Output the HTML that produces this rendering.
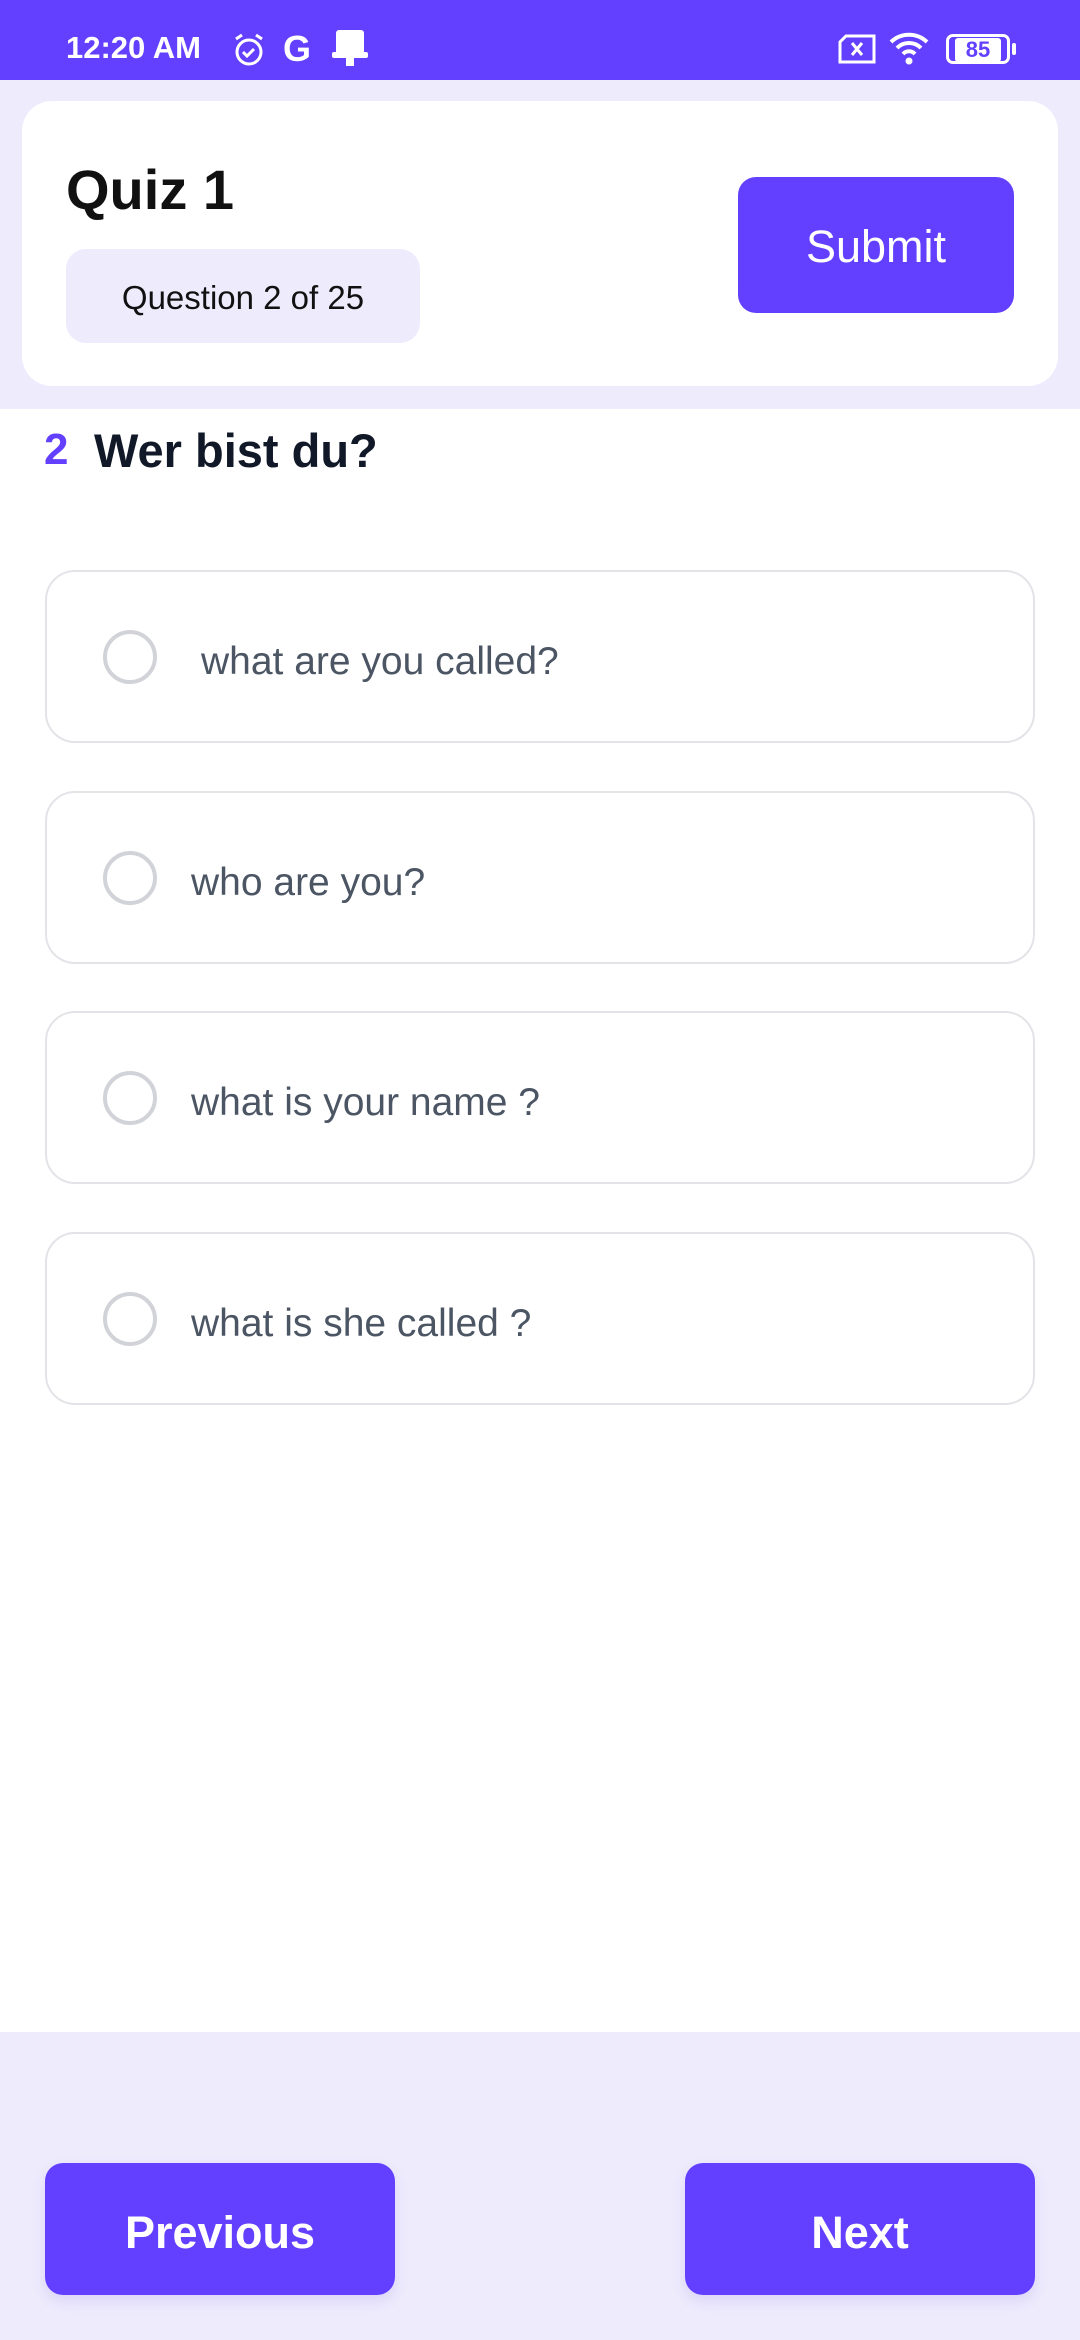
<!DOCTYPE html>
<html><head><meta charset="utf-8"><style>
*{margin:0;padding:0;box-sizing:border-box}
body{width:1080px;height:2340px;background:#fff;font-family:"Liberation Sans",sans-serif;position:relative;overflow:hidden}
.a{position:absolute}
.sb{left:0;top:0;width:1080px;height:80px;background:#6340FF;color:#fff}
.hdr{left:0;top:80px;width:1080px;height:329px;background:#EEEBFD}
.card{left:22px;top:101px;width:1036px;height:285px;background:#fff;border-radius:30px}
.btn{background:#6340FF;color:#fff;display:flex;align-items:center;justify-content:center}
.opt{left:45px;width:990px;height:173px;border:2px solid #e3e4e8;border-radius:30px;background:#fff}
.opt .c{position:absolute;left:56px;top:58px;width:54px;height:54px;border:4px solid #d1d3d8;border-radius:50%}
.opt .t{position:absolute;left:144px;top:5px;line-height:169px;font-size:39px;color:#4b5563}
.bot{left:0;top:2032px;width:1080px;height:308px;background:#EEEBFD}
</style></head><body>
<div class="a sb">
<div class="a" style="left:66px;top:30px;font-size:31px;font-weight:bold;">12:20 AM</div>
<svg class="a" style="left:232px;top:32px" width="34" height="36" viewBox="0 0 34 36"><circle cx="17" cy="20" r="12" fill="none" stroke="#fff" stroke-width="3"/><path d="M11 20l4 4 7-7M4 7l6-4M30 7l-6-4" stroke="#fff" stroke-width="3" fill="none"/></svg>
<div class="a" style="left:283px;top:28px;font-size:36px;font-weight:bold">G</div>
<svg class="a" style="left:332px;top:30px" width="36" height="38" viewBox="0 0 36 38"><rect x="4" y="0" width="28" height="26" rx="3" fill="#fff"/><rect x="0" y="22" width="36" height="6" rx="2" fill="#fff"/><rect x="14" y="28" width="8" height="8" fill="#fff"/></svg>
<svg class="a" style="left:838px;top:34px" width="38" height="30" viewBox="0 0 38 30"><path d="M8 2h28v26H2V8z" fill="none" stroke="#fff" stroke-width="3"/><path d="M14 9l10 12M24 9L14 21" stroke="#fff" stroke-width="3"/></svg>
<svg class="a" style="left:888px;top:30px" width="44" height="36" viewBox="0 0 44 36"><path d="M3 12a26 26 0 0 1 36 0M9 18a17 17 0 0 1 24 0M15 24a8 8 0 0 1 12 0" stroke="#fff" stroke-width="4" fill="none"/><circle cx="21" cy="31" r="3.5" fill="#fff"/></svg>
<div class="a" style="left:946px;top:34px;width:64px;height:30px;border:3px solid #fff;border-radius:7px;font-size:22px;font-weight:bold;text-align:center;line-height:24px"><span style="background:#fff;color:#6340FF;display:inline-block;width:46px;border-radius:3px;margin-top:1px">85</span></div>
<div class="a" style="left:1012px;top:43px;width:4px;height:12px;background:#fff;border-radius:2px"></div>
</div>
<div class="a hdr"></div>
<div class="a card"></div>
<div class="a" style="left:66px;top:157px;font-size:56px;font-weight:bold;color:#111">Quiz 1</div>
<div class="a" style="left:66px;top:249px;width:354px;height:94px;background:#EEEBFD;border-radius:20px;font-size:33px;color:#111;text-align:center;line-height:98px">Question 2 of 25</div>
<div class="a btn" style="left:738px;top:177px;width:276px;height:136px;border-radius:18px;font-size:45px;padding-top:4px">Submit</div>
<div class="a" style="left:44px;top:425px;font-size:44px;font-weight:bold;color:#6340FF">2</div>
<div class="a" style="left:94px;top:423px;font-size:47px;font-weight:bold;color:#111827">Wer bist du?</div>
<div class="a opt" style="top:570px"><div class="c"></div><div class="t" style="left:154px">what are you called?</div></div>
<div class="a opt" style="top:791px"><div class="c"></div><div class="t">who are you?</div></div>
<div class="a opt" style="top:1011px"><div class="c"></div><div class="t">what is your name ?</div></div>
<div class="a opt" style="top:1232px"><div class="c"></div><div class="t">what is she called ?</div></div>
<div class="a bot"></div>
<div class="a btn" style="left:45px;top:2163px;width:350px;height:132px;border-radius:18px;font-size:45px;font-weight:bold;padding-top:8px;box-shadow:0 6px 14px rgba(80,60,200,.12)">Previous</div>
<div class="a btn" style="left:685px;top:2163px;width:350px;height:132px;border-radius:18px;font-size:45px;font-weight:bold;padding-top:8px;box-shadow:0 6px 14px rgba(80,60,200,.12)">Next</div>
</body></html>
